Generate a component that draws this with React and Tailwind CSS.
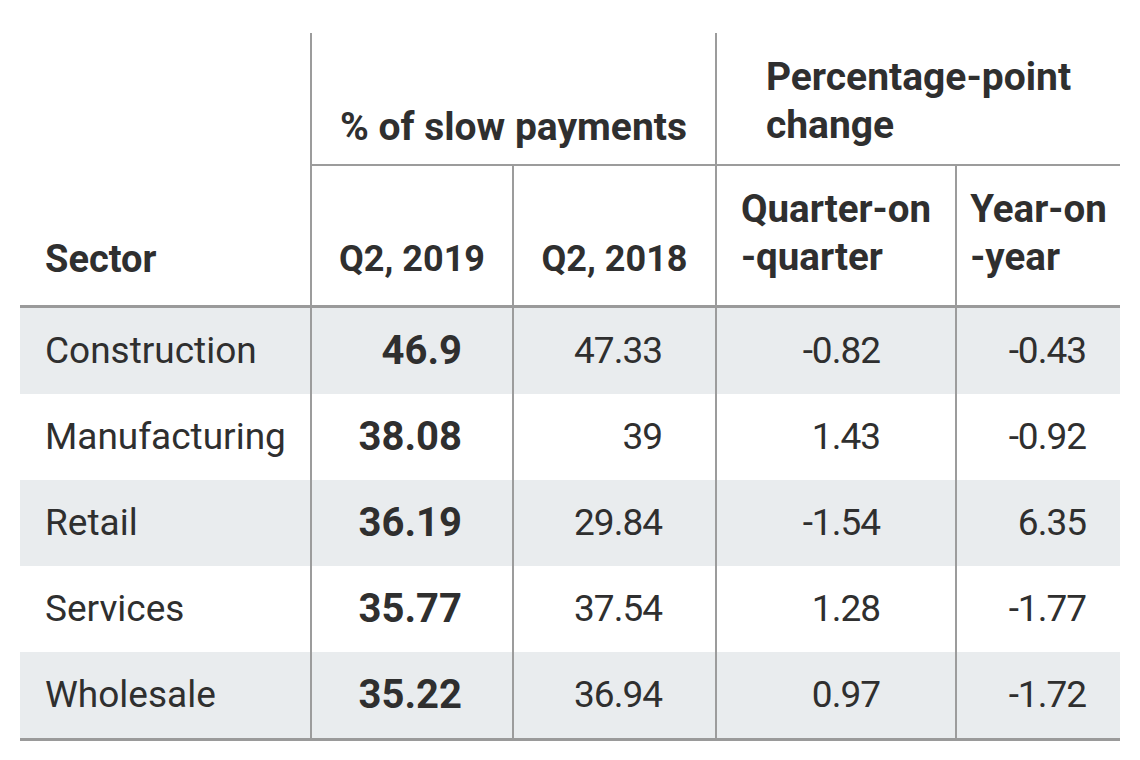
import React from 'react';

const rows = [
  { sector: 'Construction', q19: '46.9', q18: '47.33', qoq: '-0.82', yoy: '-0.43' },
  { sector: 'Manufacturing', q19: '38.08', q18: '39', qoq: '1.43', yoy: '-0.92' },
  { sector: 'Retail', q19: '36.19', q18: '29.84', qoq: '-1.54', yoy: '6.35' },
  { sector: 'Services', q19: '35.77', q18: '37.54', qoq: '1.28', yoy: '-1.77' },
  { sector: 'Wholesale', q19: '35.22', q18: '36.94', qoq: '0.97', yoy: '-1.72' },
];

export default function App() {
  return (
    <div className="w-[1140px] h-[760px] bg-white text-[#2f2f2f] font-['Roboto','Liberation_Sans',sans-serif] pt-[33px] pl-[20px]">
      <div className="w-[1100px] grid grid-cols-[290px_202px_203px_240px_165px] text-[37px] leading-[48px]">
        {/* header rows */}
        <div className="row-span-2 flex items-end pl-[25px] pb-[22px] font-bold text-[38px]">Sector</div>
        <div className="col-span-2 h-[133px] border-l-2 border-b-2 border-[#9c9c9c] flex items-end justify-center pb-[13px] font-bold text-[39px]">
          % of slow payments
        </div>
        <div className="col-span-2 h-[133px] border-l-2 border-b-2 border-[#9c9c9c] flex items-end justify-center pb-[15px] font-bold text-[39px]">
          <div className="text-left">
            Percentage-point
            <br />
            change
          </div>
        </div>
        <div className="h-[139px] border-l-2 border-[#9c9c9c] flex items-end justify-center pb-[22px] font-bold text-[36px]">Q2, 2019</div>
        <div className="h-[139px] border-l-2 border-[#9c9c9c] flex items-end justify-center pb-[22px] font-bold text-[36px]">Q2, 2018</div>
        <div className="h-[139px] border-l-2 border-[#9c9c9c] flex items-end justify-center pb-[24px] font-bold text-[38.5px]">
          <div className="text-left">
            Quarter-on
            <br />
            -quarter
          </div>
        </div>
        <div className="h-[139px] border-l-2 border-[#9c9c9c] flex items-end justify-center pb-[24px] font-bold text-[38.5px]">
          <div className="text-left">
            Year-on
            <br />
            -year
          </div>
        </div>

        <div className="col-span-5 h-[3px] bg-[#9a9a9a]" />

        {rows.map((r, i) => {
          const bg = i % 2 === 0 ? 'bg-[#e9ecee]' : 'bg-white';
          return (
            <React.Fragment key={r.sector}>
              <div className={`${bg} h-[86px] flex items-center pl-[25px]`}>{r.sector}</div>
              <div className={`${bg} h-[86px] border-l-2 border-[#9c9c9c] flex items-center justify-end pr-[50px] font-bold text-[40px]`}>{r.q19}</div>
              <div className={`${bg} h-[86px] border-l-2 border-[#9c9c9c] flex items-center justify-end pr-[53px] tracking-[-1px]`}>{r.q18}</div>
              <div className={`${bg} h-[86px] border-l-2 border-[#9c9c9c] flex items-center justify-end pr-[75px] tracking-[-1px]`}>{r.qoq}</div>
              <div className={`${bg} h-[86px] border-l-2 border-[#9c9c9c] flex items-center justify-end pr-[34px] tracking-[-1px]`}>{r.yoy}</div>
            </React.Fragment>
          );
        })}

        <div className="col-span-5 h-[3px] bg-[#9a9a9a]" />
      </div>
    </div>
  );
}
